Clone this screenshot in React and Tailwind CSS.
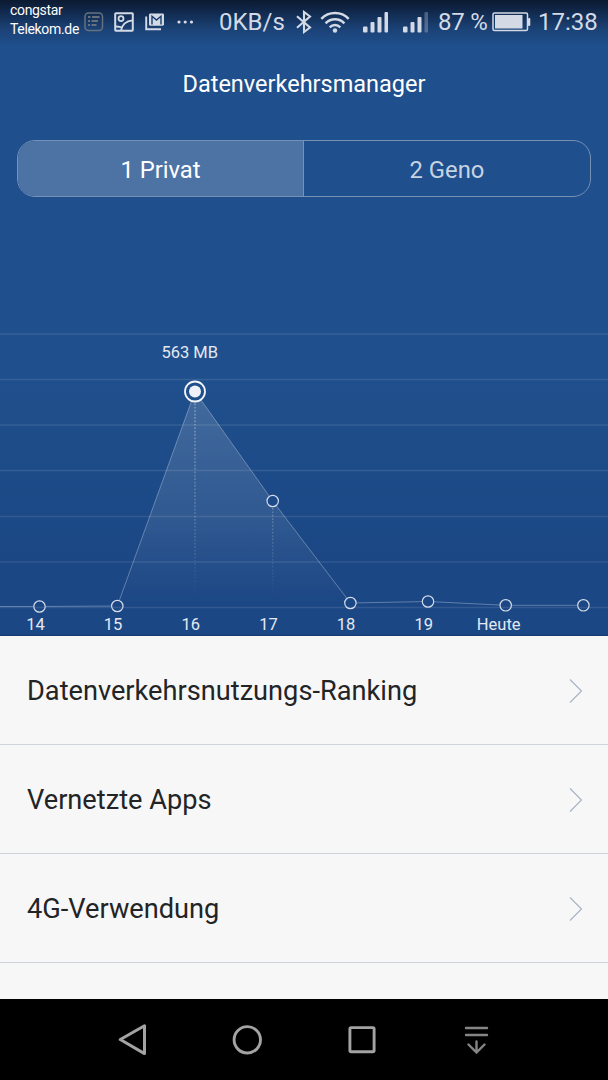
import React from "react";

/* ---------------------------------------------
   Chart data: x / y of each day on the canvas
---------------------------------------------- */
const points = [
  { x: 39.5, y: 286.5, label: "14", labelX: 35.5 },
  { x: 117.3, y: 286, label: "15", labelX: 113 },
  { x: 195, y: 71.5, label: "16", labelX: 190.7, active: true },
  { x: 272.7, y: 181, label: "17", labelX: 268.5, drop: true },
  { x: 350.4, y: 283, label: "18", labelX: 346 },
  { x: 428, y: 281.5, label: "19", labelX: 423.7 },
  { x: 505.7, y: 285.3, label: "Heute", labelX: 498.7 },
  { x: 583.4, y: 285.3 },
];

const gridLines = [14, 59.5, 105, 150.5, 196.5, 242, 287.5];

const menu = ["Datenverkehrsnutzungs-Ranking", "Vernetzte Apps", "4G-Verwendung"];

/* ---------------------------------------------
   Status bar
---------------------------------------------- */
const Signal = ({ weak, className }) => (
  <svg className={className} width="26" height="22" viewBox="0 0 26 22" fill="currentColor">
    <rect x="0" y="15.5" width="4.5" height="6" rx="1" />
    <rect x="7.5" y="11" width="4" height="10.5" rx="1" />
    <rect x="14.5" y="6" width="4" height="15.5" rx="1" />
    <rect x="21.5" y="1" width="3.5" height="20.5" rx="1" opacity={weak ? 0.3 : 1} />
  </svg>
);

const StatusBar = () => (
  <div className="h-11 flex items-center text-[#d3dae5] whitespace-nowrap">
    <div className="w-[84px] h-11 shrink-0 pl-2.5 pt-px text-[14px] tracking-[-0.33px] leading-[18.5px] text-white">
      <div>congstar</div>
      <div>Telekom.de</div>
    </div>

    {/* notification icons */}
    <svg className="shrink-0" width="20" height="20" viewBox="0 0 20 20" fill="none" stroke="#66707e" strokeWidth="1.5">
      <rect x="1" y="1" width="17.5" height="17.5" rx="3.5" />
      <path d="M4 5h2.5M8 5h7.5M4 9h2M7.5 9H14M4 13h2M7.5 13h5" strokeWidth="1.8" />
    </svg>
    <svg className="shrink-0 ml-2.5" width="20" height="20" viewBox="0 0 20 20" fill="none" stroke="currentColor" strokeWidth="1.8">
      <rect x="1.2" y="1.2" width="17.6" height="17.6" rx="0.8" strokeWidth="2" />
      <circle cx="7" cy="6.6" r="2.5" />
      <path d="M7 18.5C8 13 12 9 18.5 8.3M2 14.5c3 0 5 .5 6.5 1.5" />
    </svg>
    <svg className="shrink-0 ml-[11px]" width="20" height="20" viewBox="0 0 20 20" fill="none" stroke="currentColor">
      <path d="M1.2 4.5v12.7H16" strokeWidth="1.9" />
      <rect x="4" y="1.5" width="15" height="12.2" rx="1.4" fill="currentColor" stroke="none" />
      <path d="M7 12.5V4.3l4.5 3.8L16 4.3v8.2" stroke="#1a3c6c" strokeWidth="1.4" />
    </svg>
    <svg className="shrink-0 ml-3" width="17" height="6" viewBox="0 0 17 6" fill="currentColor">
      <circle cx="2" cy="3" r="1.6" />
      <circle cx="8.2" cy="3" r="1.6" />
      <circle cx="14.5" cy="3" r="1.6" />
    </svg>

    {/* system icons */}
    <span className="w-[102px] shrink-0 pl-[25px] text-2xl">0KB/s</span>
    <svg className="shrink-0" width="17" height="24" viewBox="0 0 17 24" fill="none" stroke="currentColor" strokeWidth="2.1">
      <path d="M1 6.3l13 11.2L8 22V2l6 4.5L1 17.7" />
    </svg>
    <svg className="shrink-0 ml-[7px]" width="30" height="24" viewBox="0 0 30 24" fill="none" stroke="currentColor" strokeWidth="2.5">
      <path d="M1.3 8.8C8.8 1.2 21.2 1.2 28.7 8.8" />
      <path d="M5.6 13.3C10.8 8 19.2 8 24.4 13.3" />
      <path d="M9.7 17.3c2.9-3 7.7-3 10.6 0" />
      <circle cx="15" cy="20.5" r="2.2" fill="currentColor" stroke="none" />
    </svg>
    <Signal className="shrink-0 ml-[13px]" />
    <Signal className="shrink-0 ml-3.5" weak />
    <span className="w-[63px] shrink-0 pl-[9px] text-2xl tracking-[-0.2px]">87 %</span>
    <svg className="shrink-0" width="39" height="20" viewBox="0 0 39 20" fill="none" stroke="currentColor">
      <rect x="1" y="1" width="34.5" height="17.5" rx="1.5" strokeWidth="1.5" />
      <rect x="3" y="3" width="27.5" height="13.5" fill="currentColor" stroke="none" />
      <rect x="36" y="6" width="2.3" height="8" rx="1" fill="currentColor" stroke="none" />
    </svg>
    <span className="shrink-0 ml-[7px] text-2xl">17:38</span>
  </div>
);

/* ---------------------------------------------
   Daily usage chart
---------------------------------------------- */
const UsageChart = () => {
  const line = "0,286.5 " + points.map((p) => `${p.x},${p.y}`).join(" ");

  return (
    <svg className="block" width="608" height="316" viewBox="0 0 608 316">
      <defs>
        <linearGradient id="area" x1="0" y1="71" x2="0" y2="288" gradientUnits="userSpaceOnUse">
          <stop offset="0" stopColor="#fff" stopOpacity="0.16" />
          <stop offset="0.6" stopColor="#fff" stopOpacity="0.09" />
          <stop offset="1" stopColor="#fff" stopOpacity="0" />
        </linearGradient>
        <linearGradient id="guide" x1="0" y1="71" x2="0" y2="280" gradientUnits="userSpaceOnUse">
          <stop offset="0" stopColor="#fff" stopOpacity="0.4" />
          <stop offset="0.6" stopColor="#fff" stopOpacity="0.24" />
          <stop offset="1" stopColor="#fff" stopOpacity="0" />
        </linearGradient>
        <mask id="dots">
          <rect width="608" height="316" fill="#fff" />
          {points.map((p) => (
            <circle key={p.x} cx={p.x} cy={p.y} r={p.active ? 10 : 6} fill="#000" />
          ))}
        </mask>
      </defs>

      {gridLines.map((y) => (
        <line key={y} x1="0" x2="608" y1={y} y2={y} stroke="#fff" strokeOpacity="0.1" strokeWidth="1.5" />
      ))}

      <g mask="url(#dots)">
        <polygon points={`0,288 ${line} 583.4,288`} fill="url(#area)" />
        <polyline points={line} fill="none" stroke="#fff" strokeOpacity="0.3" />
      </g>

      {/* dotted guides below the high days */}
      {points
        .filter((p) => p.active || p.drop)
        .map((p) => (
          <line
            key={p.x}
            x1={p.x}
            x2={p.x + 0.01}
            y1={p.y + (p.active ? 12 : 7)}
            y2="280"
            stroke="url(#guide)"
            strokeWidth="1.3"
            strokeDasharray="1.7 1.7"
          />
        ))}

      {points.map((p) =>
        p.active ? (
          <g key={p.x}>
            <circle cx={p.x} cy={p.y} r="10" fill="none" stroke="#f2f5f9" strokeWidth="1.8" />
            <circle cx={p.x} cy={p.y} r="6" fill="#eef1f6" />
          </g>
        ) : (
          <circle key={p.x} cx={p.x} cy={p.y} r="5.7" fill="none" stroke="#d5ddea" strokeWidth="1.2" />
        )
      )}

      <g fill="#e4e9f1" fontSize="16.5" textAnchor="middle">
        <text x="189.7" y="37.5">563 MB</text>
        {points.map((p) =>
          p.label ? (
            <text key={p.x} x={p.labelX} y="310">
              {p.label}
            </text>
          ) : null
        )}
      </g>
    </svg>
  );
};

const App = () => {
  return (
    <div className="w-[608px] h-[1080px] overflow-hidden flex flex-col bg-[#f7f7f7] font-['Roboto',sans-serif]">
      <div className="h-[636px] shrink-0 flex flex-col bg-[linear-gradient(#0b1a30_0px,#0f2444_8px,#1b4378_30px,#1f4f8c_46px,#1f4f8c_380px,#1b4785_560px,#1b4785_634px,#15386b_636px)]">
        <StatusBar />
        <h1 className="h-20 text-center text-[23.5px] leading-[80px] text-white">Datenverkehrsmanager</h1>
        <div className="mt-4 mx-[17px] h-[57px] shrink-0 flex rounded-[18px] border border-[#7790b6] overflow-hidden text-[23.8px]">
          <div className="w-[286px] pt-1 flex items-center justify-center bg-[#4d73a5] border-r border-[#7790b6] text-white">
            1 Privat
          </div>
          <div className="flex-1 pt-1 flex items-center justify-center text-[#c7d3e2]">2 Geno</div>
        </div>
        <div className="mt-auto">
          <UsageChart />
        </div>
      </div>

      <div className="flex-1">
        {menu.map((item) => (
          <div
            key={item}
            className="h-[109px] pt-0.5 flex items-center justify-between pl-[27px] pr-[25px] border-b border-[#ced3dc] text-[27.2px] text-[#222426]"
          >
            <span>{item}</span>
            <svg width="14" height="24" viewBox="0 0 14 24" fill="none" stroke="#a9b4c6" strokeWidth="1.2">
              <path d="M1 0.5L12.5 12L1 23.5" />
            </svg>
          </div>
        ))}
      </div>

      {/* navigation keys */}
      <div className="h-[81px] shrink-0 flex items-center bg-black text-[#a3a3a3]">
        <svg className="ml-[118px]" width="29" height="32" viewBox="0 0 29 32" fill="none" stroke="currentColor" strokeWidth="3" strokeLinejoin="round">
          <path d="M2.3 15.5L26.5 1.8v27.8z" />
        </svg>
        <svg className="ml-[85px]" width="30" height="30" viewBox="0 0 30 30" fill="none" stroke="currentColor" strokeWidth="2.9">
          <circle cx="15.3" cy="14.8" r="13.2" />
        </svg>
        <svg className="ml-[86px]" width="28" height="28" viewBox="0 0 28 28" fill="none" stroke="currentColor" strokeWidth="2.9">
          <rect x="1.9" y="1.6" width="24.2" height="24.2" rx="1.2" />
        </svg>
        <svg className="ml-[88px]" width="25" height="28" viewBox="0 0 25 28" fill="none" stroke="#858585" strokeWidth="2.4" strokeLinecap="round">
          <path d="M2 2H23M2 9H23M12.5 15.5V26M4.5 18.5l8 8l8-8" />
        </svg>
      </div>
    </div>
  );
};

export default App;
